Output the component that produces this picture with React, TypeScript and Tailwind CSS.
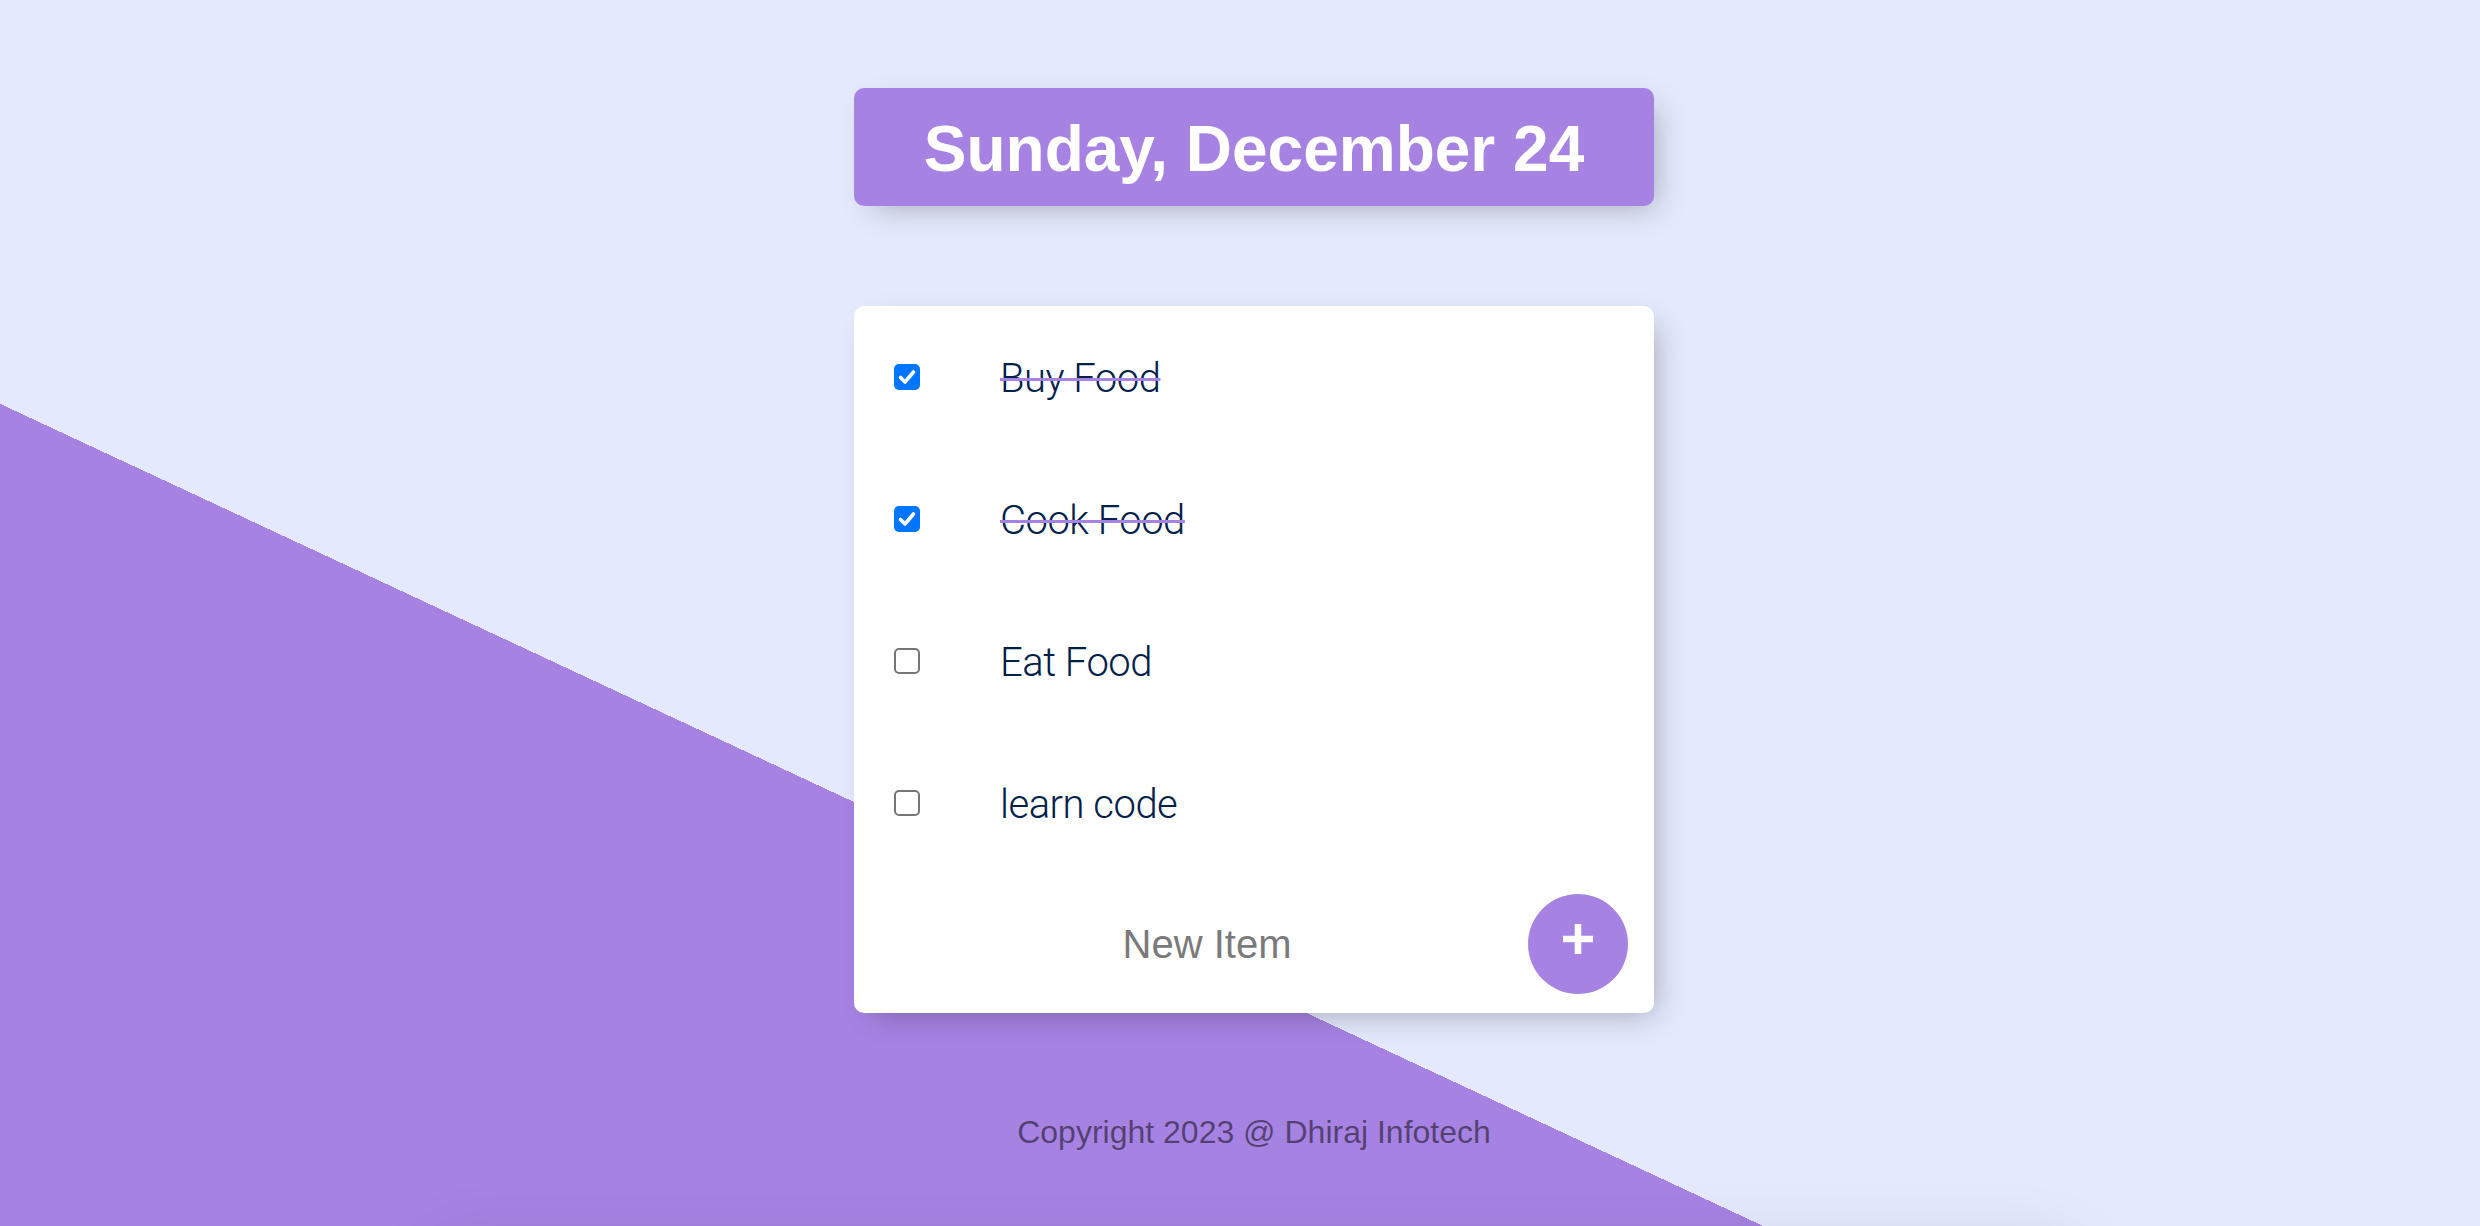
import { useState } from "react";

type Todo = { id: number; text: string; done: boolean };

const initial: Todo[] = [
  { id: 1, text: "Buy Food", done: true },
  { id: 2, text: "Cook Food", done: true },
  { id: 3, text: "Eat Food", done: false },
  { id: 4, text: "learn code", done: false },
];

/** Mac-Chrome-looking checkbox, drawn at 2x. */
function Check({ checked, onToggle }: { checked: boolean; onToggle: () => void }) {
  return (
    <button
      type="button"
      onClick={onToggle}
      className={`mx-[40px] flex h-[26px] w-[26px] shrink-0 items-center justify-center rounded-[5px] ${
        checked ? "bg-[#0075ff]" : "border-[2.5px] border-[#767676] bg-white"
      }`}
    >
      {checked && (
        <svg viewBox="0 0 26 26" className="h-[26px] w-[26px]" fill="none">
          <path
            d="M6.5 13.5l4.5 4.5 8.5-10"
            stroke="white"
            strokeWidth="3.6"
            strokeLinecap="round"
            strokeLinejoin="round"
          />
        </svg>
      )}
    </button>
  );
}

export default function App() {
  const [todos, setTodos] = useState<Todo[]>(initial);

  const toggle = (id: number) =>
    setTodos((t) => t.map((x) => (x.id === id ? { ...x, done: !x.done } : x)));

  return (
    <div className="h-[1226px] overflow-hidden bg-[#E4E9FD] bg-[linear-gradient(25deg,#A683E3_50%,#E4E9FD_50%)] bg-[length:100%_1964px] bg-top bg-no-repeat font-['Liberation_Sans',Arial,sans-serif]">
      <div className="flex flex-col items-center pl-[28px] pt-[88px]">
        {/* Date heading */}
        <div className="flex h-[118px] w-[800px] items-center justify-center rounded-[10px] bg-[#A683E3] shadow-[10px_10px_30px_-10px_rgba(0,0,0,0.3)]">
          <h1 className="pt-[4px] text-[64px] font-bold leading-none text-white">
            Sunday, December 24
          </h1>
        </div>

        {/* List */}
        <div className="mt-[100px] w-[800px] rounded-[10px] bg-white shadow-[10px_10px_30px_-10px_rgba(0,0,0,0.3)]">
          {todos.map((t) => (
            <div key={t.id} className="flex h-[142px] items-center">
              <Check checked={t.done} onToggle={() => toggle(t.id)} />
              <p
                className={`pl-[40px] pt-[3px] font-['Roboto',sans-serif] text-[40px] font-light tracking-[-0.5px] text-[#00204a] ${
                  t.done
                    ? "line-through [text-decoration-color:#A683E3] [text-decoration-thickness:3px]"
                    : ""
                }`}
              >
                {t.text}
              </p>
            </div>
          ))}

          <form
            className="flex h-[139px] items-center pl-[40px]"
            onSubmit={(e) => e.preventDefault()}
          >
            <input
              type="text"
              placeholder="New Item"
              className="h-[120px] w-[626px] bg-transparent pt-[2px] text-center font-['Liberation_Sans',Arial,sans-serif] text-[40px] text-[#00204a] outline-none placeholder:text-[#7a7a7a]"
            />
            <button
              type="submit"
              className="ml-[8px] flex h-[100px] w-[100px] items-center justify-center rounded-full bg-[#A683E3] pb-[10px]"
            >
              <svg viewBox="0 0 30 30" className="h-[30px] w-[30px]" fill="none">
                <path d="M15 0v30M0 15h30" stroke="white" strokeWidth="6.5" />
              </svg>
            </button>
          </form>
        </div>

        <footer className="mt-[101px] text-center text-[32px] leading-[37px] text-black/50">
          Copyright 2023 @ Dhiraj Infotech
        </footer>

        {/* shadow of the next block, just below the fold */}
        <div className="mt-[96px] h-[200px] w-[1640px] shrink-0 rounded-[20px] shadow-[0_0_70px_rgba(0,0,0,0.12)]" />
      </div>
    </div>
  );
}
